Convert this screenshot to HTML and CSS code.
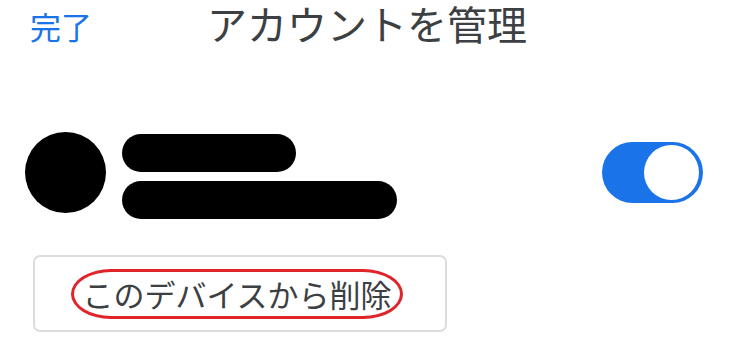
FILE: index.html
```html
<!DOCTYPE html>
<html lang="ja">
<head>
<meta charset="utf-8">
<link rel="stylesheet" href="styles.css">
</head>
<body>
<div class="page">
  <header class="topbar">
    <span class="done">完了</span>
    <h1 class="title">アカウントを管理</h1>
    <span></span>
  </header>
  <section class="account">
    <div class="avatar"></div>
    <div class="lines">
      <div class="line line-short"></div>
      <div class="line line-long"></div>
    </div>
    <div class="toggle"><div class="thumb"></div></div>
  </section>
  <button class="remove"><span class="mark">このデバイスから削除</span></button>
</div>
</body>
</html>
```
FILE: styles.css
```css
html, body {
  margin: 0;
  padding: 0;
  background: #ffffff;
}
body {
  font-family: "Noto Sans CJK JP", "Noto Sans", sans-serif;
  width: 734px;
  height: 340px;
  overflow: hidden;
}
.page {
  display: flex;
  flex-direction: column;
}
.topbar {
  display: grid;
  grid-template-columns: 1fr auto 1fr;
  align-items: start;
  height: 48px;
  padding: 0 0 0 30px;
}
.done {
  color: #1a73e8;
  font-size: 31px;
  line-height: 40px;
  margin-top: 6px;
}
.title {
  margin: 3px 0 0 -30px;
  font-weight: 400;
  font-size: 40px;
  line-height: 40px;
  color: #3c4043;
}
.account {
  display: flex;
  align-items: center;
  margin-top: 78px;
  padding-left: 25px;
  padding-right: 31px;
}
.avatar {
  width: 81px;
  height: 81px;
  border-radius: 50%;
  background: #000;
  flex: none;
}
.lines {
  display: flex;
  flex-direction: column;
  gap: 9px;
  margin-left: 16px;
  margin-top: 8px;
}
.line {
  height: 38px;
  border-radius: 19px;
  background: #000;
}
.line-short { width: 174px; }
.line-long { width: 275px; }
.toggle {
  margin-left: auto;
  width: 101px;
  height: 61px;
  border-radius: 31px;
  background: #1a73e8;
  display: flex;
  align-items: center;
  justify-content: flex-end;
  padding-right: 4px;
  box-sizing: border-box;
  margin-top: -1px;
}
.thumb {
  width: 55px;
  height: 55px;
  border-radius: 50%;
  background: #fff;
}
.remove {
  margin: 36px 0 0 33px;
  width: 414px;
  height: 77px;
  border: 2px solid #dadce0;
  border-radius: 7px;
  background: #fff;
  display: flex;
  align-items: center;
  justify-content: center;
  padding: 0;
  font-family: inherit;
}
.mark {
  display: block;
  border: 3px solid #e0242a;
  border-radius: 40px / 25px;
  padding: 3px 8px;
  font-size: 31px;
  line-height: 38px;
  color: #3c4043;
  margin-left: -6px;
}
```
